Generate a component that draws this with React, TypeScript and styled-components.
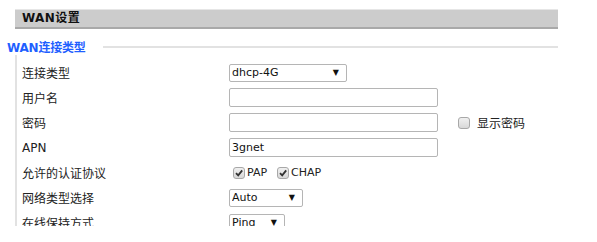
import styled, { createGlobalStyle } from 'styled-components';

const GlobalStyle = createGlobalStyle`
	body {
		margin: 0;
		background: #fff;
		font-family: "DejaVu Sans", "Noto Sans CJK SC", sans-serif;
		font-size: 12px;
		color: #222;
	}
`;

const Check = ({ checked }: { checked?: boolean }) => (
	<CheckBox>
		{checked && (
			<svg width="10" height="10" viewBox="0 0 10 10">
				<path d="M2 5.2 L4.2 7.4 L8.2 2.4" fill="none" stroke="#333" strokeWidth="1.8" />
			</svg>
		)}
	</CheckBox>
);

const Select = ({ value, width }: { value: string; width: number }) => (
	<SelectWrap $width={width}>
		<SelectBox defaultValue={value}>
			<option>{value}</option>
		</SelectBox>
		<Arrow>▼</Arrow>
	</SelectWrap>
);

const App = () => {
	return (
		<>
			<GlobalStyle />
			<Frame>
				<Page>
					<TitleBar>WAN设置</TitleBar>
					<LegendRow>
						<Legend>WAN连接类型</Legend>
						<LegendLine />
					</LegendRow>
					<Body>
						<Row>
							<Label>连接类型</Label>
							<Select value="dhcp-4G" width={118} />
						</Row>
						<Row>
							<Label>用户名</Label>
							<TextInput />
						</Row>
						<Row>
							<Label>密码</Label>
							<TextInput type="password" />
							<ShowPwd>
								<Check />
								<span>显示密码</span>
							</ShowPwd>
						</Row>
						<Row>
							<Label>APN</Label>
							<TextInput defaultValue="3gnet" />
						</Row>
						<Row>
							<Label>允许的认证协议</Label>
							<Options>
								<Option>
									<Check checked />
									<span>PAP</span>
								</Option>
								<Option>
									<Check checked />
									<span>CHAP</span>
								</Option>
							</Options>
						</Row>
						<Row>
							<Label>网络类型选择</Label>
							<Select value="Auto" width={74} />
						</Row>
						<Row>
							<Label>在线保持方式</Label>
							<Select value="Ping" width={56} />
						</Row>
					</Body>
				</Page>
			</Frame>
		</>
	);
};

const Frame = styled.div`
	height: 226px;
	overflow: hidden;
`;

const Page = styled.div`
	width: 543px;
	margin-left: 15px;
	padding-top: 9px;
`;

const TitleBar = styled.div`
	height: 17px;
	line-height: 17px;
	padding-left: 7px;
	background: #cccccc;
	border-top: 1px solid #e6e6e6;
	border-bottom: 2px solid #a9a9a9;
	font-family: "DejaVu Sans", "Noto Sans CJK SC", sans-serif;
	font-size: 12px;
	font-weight: bold;
	letter-spacing: 0.4px;
	color: #111;
`;

const LegendRow = styled.div`
	display: flex;
	align-items: center;
	height: 17px;
	margin: 9px 0 0 -8px;
`;

const Legend = styled.span`
	font-size: 12px;
	font-weight: bold;
	color: #1f5fff;
	letter-spacing: -0.2px;
`;

const LegendLine = styled.div`
	flex: 1;
	margin-left: 17px;
	height: 0;
	border-top: 2px solid #e2e2e2;
`;

const Body = styled.div`
	border-left: 2px solid #e2e2e2;
	padding: 5px 0 0 5px;
`;

const Row = styled.div`
	display: flex;
	align-items: center;
	height: 25px;
`;

const Label = styled.div`
	width: 207px;
	flex-shrink: 0;
	font-size: 12px;
	color: #222;
`;

const TextInput = styled.input`
	box-sizing: border-box;
	width: 209px;
	height: 19px;
	margin: 0;
	padding: 0 2px;
	border: 1px solid #b5b5b5;
	border-radius: 2px;
	font-family: "DejaVu Sans", sans-serif;
	font-size: 11px;
	color: #111;
	outline: none;
`;

const SelectWrap = styled.div<{ $width: number }>`
	position: relative;
	width: ${(p) => p.$width}px;
	height: 18px;
`;

const SelectBox = styled.select`
	box-sizing: border-box;
	width: 100%;
	height: 100%;
	margin: 0;
	padding: 0 2px;
	appearance: none;
	background: #fff;
	border: 1px solid #b5b5b5;
	border-radius: 2px;
	font-family: "DejaVu Sans", sans-serif;
	font-size: 11px;
	color: #111;
	outline: none;
`;

const Arrow = styled.span`
	position: absolute;
	right: 8px;
	top: 4px;
	font-size: 8px;
	line-height: 10px;
	color: #111;
	pointer-events: none;
`;

const CheckBox = styled.span`
	box-sizing: border-box;
	display: inline-flex;
	align-items: center;
	justify-content: center;
	width: 12px;
	height: 12px;
	border: 1px solid #a8a8a8;
	border-radius: 3px;
	background: linear-gradient(#f0f0f0, #d8d8d8);
`;

const ShowPwd = styled.label`
	display: flex;
	align-items: center;
	gap: 7px;
	margin-left: 20px;
	font-size: 12px;
	color: #222;
`;

const Options = styled.div`
	display: flex;
	align-items: center;
	gap: 10px;
	padding-left: 4px;
`;

const Option = styled.label`
	display: flex;
	align-items: center;
	gap: 2px;
	font-family: "DejaVu Sans", sans-serif;
	font-size: 11px;
	color: #222;
`;

export default App;
